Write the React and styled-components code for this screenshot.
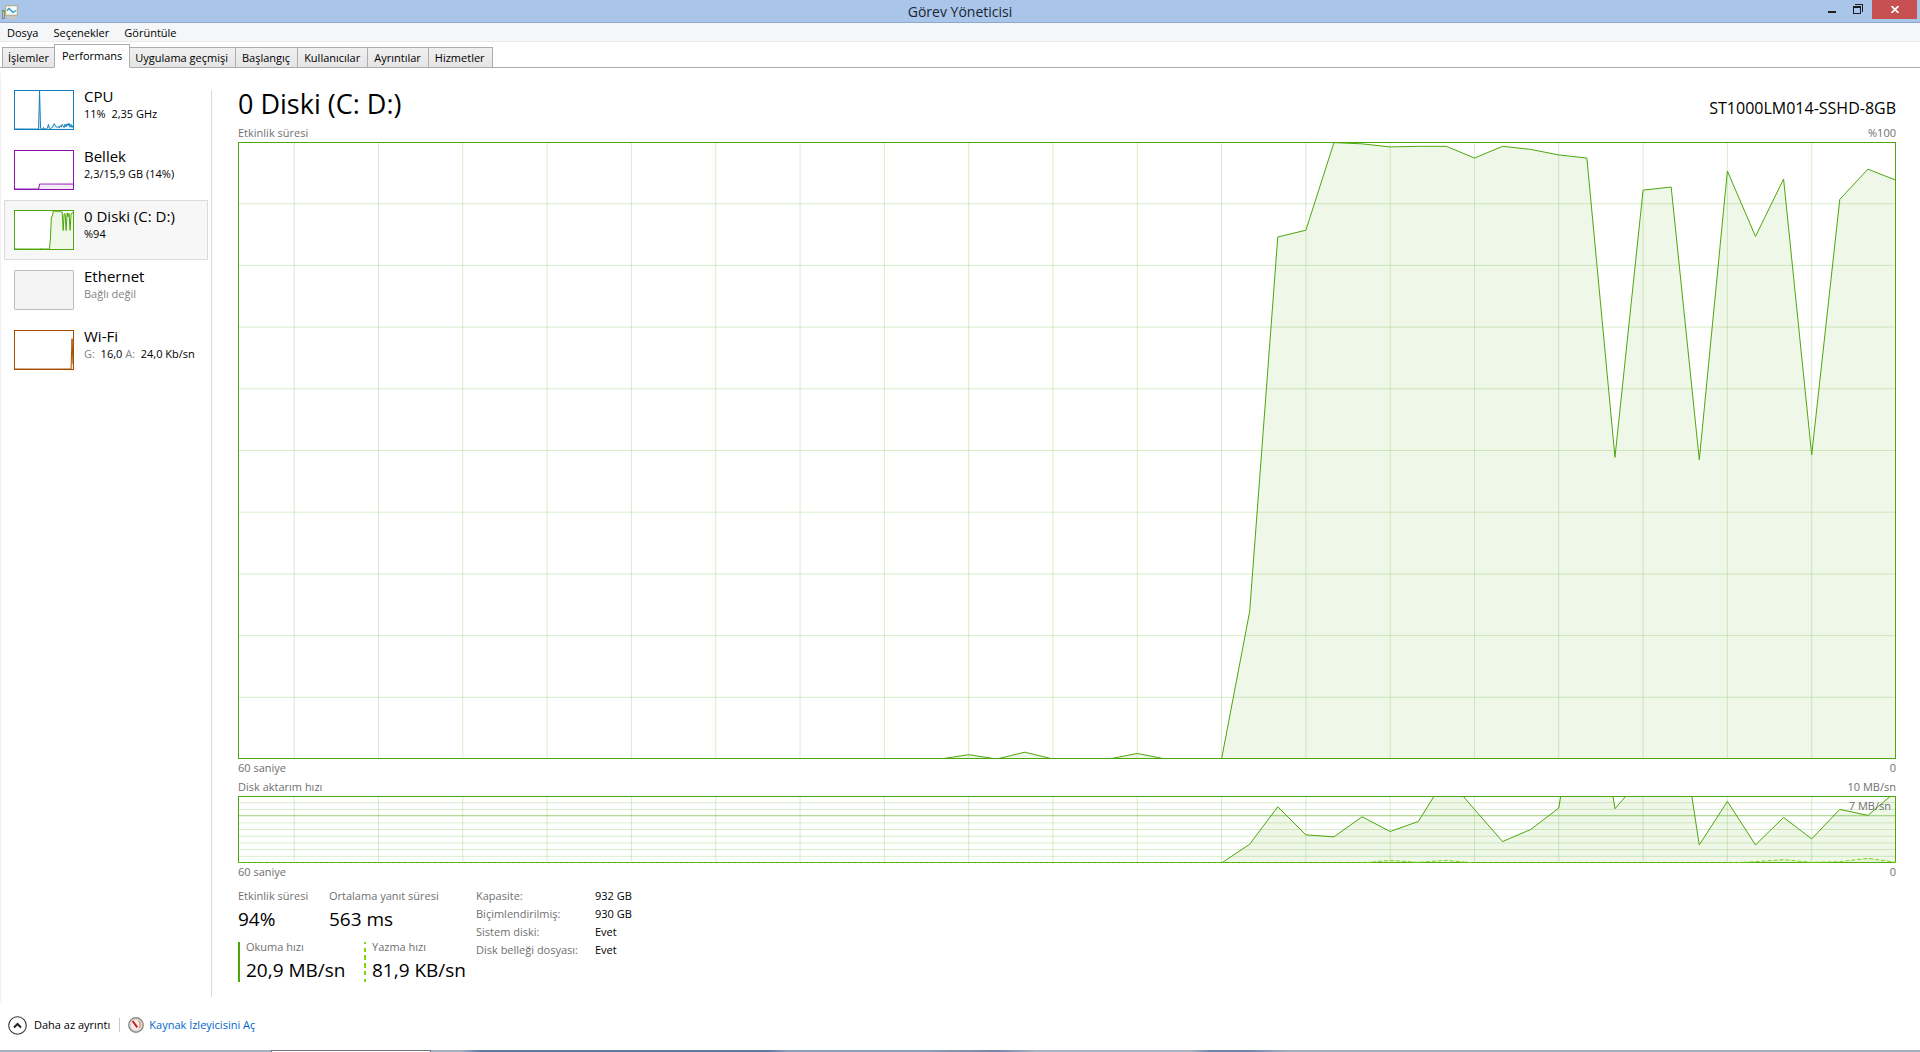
import React from "react";
import styled, { createGlobalStyle } from "styled-components";

const GlobalStyle = createGlobalStyle`
  *, *::before, *::after { box-sizing: border-box; }
  body {
    margin: 0;
    background: #fff;
    color: #000;
    font-family: "Open Sans", "Noto Sans", "Segoe UI", sans-serif;
    font-size: 11px;
    line-height: 18px;
  }
  button {
    font: inherit;
    color: inherit;
    background: none;
    border: 0;
    padding: 0;
    margin: 0;
    text-align: left;
    white-space: nowrap;
  }
`;

const Window = styled.div`
  display: flex;
  flex-direction: column;
  min-height: 100vh;
`;

const TitleBar = styled.header`
  display: grid;
  grid-template-columns: 1fr auto 1fr;
  height: 23px;
  background: #a9c5ea;
  border-bottom: 1px solid #8da9cb;
`;

const AppIcon = styled.svg`
  display: block;
  margin: 4px 0 0 2px;
`;

const WindowTitle = styled.h1`
  margin: 0;
  font-size: 14px;
  font-weight: 400;
  line-height: 23px;
  color: #1c2530;
`;

const WindowButtons = styled.div`
  display: flex;
  justify-content: flex-end;
  align-items: flex-start;
  padding-right: 3px;
`;

const WindowButton = styled.button`
  display: flex;
  align-items: center;
  justify-content: center;
  width: ${(p) => (p.$close ? 45 : 26)}px;
  height: ${(p) => (p.$close ? 19 : 18)}px;
  margin-left: ${(p) => (p.$close ? 1 : 0)}px;
  background: ${(p) => (p.$close ? "#c75050" : "transparent")};
`;

const MenuBar = styled.nav`
  display: flex;
  gap: 15px;
  height: 19px;
  padding-left: 7px;
  background: #f5f6f7;
  border-bottom: 1px solid #e8e9ea;
  line-height: 19px;
`;

const TabStrip = styled.div`
  display: flex;
  align-items: flex-end;
  height: 26px;
  padding-left: 2px;
  border-bottom: 1px solid #acacac;
`;

const Tab = styled.button`
  height: ${(p) => (p.$active ? 24 : 21)}px;
  margin: 0 ${(p) => (p.$active ? -1 : 0)}px -1px ${(p) => (p.$active ? -1 : 0)}px;
  padding: ${(p) => (p.$active ? "0 7px" : p.$first ? "0 5px" : "0 7px 0 6px")};
  border: 1px solid #acacac;
  border-left-width: ${(p) => (p.$active || p.$first ? 1 : 0)}px;
  border-bottom-color: ${(p) => (p.$active ? "#fff" : "#acacac")};
  background: ${(p) => (p.$active ? "#fff" : "linear-gradient(#f0f0f0, #e5e5e5)")};
  position: relative;
  z-index: ${(p) => (p.$active ? 1 : 0)};
`;

const Body = styled.div`
  display: flex;
  flex: 1;
  margin-top: 5px;
  border-left: 1px solid #f0f0f0;
`;

const Sidebar = styled.aside`
  flex: none;
  width: 211px;
  margin: 17px 0 5px;
  border-right: 1px solid #d9d9d9;
`;

const ResourceList = styled.div`
  display: flex;
  flex-direction: column;
  margin: -10px 3px 0;
`;

const Resource = styled.button`
  display: flex;
  gap: 10px;
  height: 60px;
  padding: 9px 0 0 9px;
  border: 1px solid ${(p) => (p.$selected ? "#dadada" : "transparent")};
  background: ${(p) => (p.$selected ? "#f7f7f7" : "transparent")};
`;

const MiniFrame = styled.span`
  flex: none;
  width: 60px;
  height: 40px;
  border: 1px solid ${(p) => p.$color};
  border-radius: ${(p) => (p.$idle ? 1 : 0)}px;
  background: ${(p) => (p.$idle ? "#f4f4f4" : "#fff")};
`;

const ResourceText = styled.span`
  display: flex;
  flex-direction: column;
  margin-top: -3px;
`;

const ResourceName = styled.span`
  font-size: 15px;
  line-height: 18px;
`;

const ResourceDetail = styled.span`
  line-height: 18px;
  white-space: pre;
  color: ${(p) => (p.$idle ? "#838383" : "#000")};
`;

const Muted = styled.span`
  color: #838383;
`;

const Main = styled.main`
  display: flex;
  flex-direction: column;
  flex: 1;
  min-width: 0;
  padding: 11px 24px 20px 26px;
`;

const Heading = styled.div`
  display: flex;
  justify-content: space-between;
  align-items: baseline;
  height: 40px;
`;

const DiskTitle = styled.h2`
  margin: 0;
  font-size: 27px;
  font-weight: 400;
  line-height: 39px;
`;

const DiskModel = styled.span`
  font-size: 16px;
`;

const ChartLabels = styled.div`
  display: flex;
  justify-content: space-between;
  margin-top: ${(p) => p.$gap || 0}px;
  color: #707070;
`;

const ChartFrame = styled.div`
  position: relative;
  display: flex;
  flex: ${(p) => (p.$height ? "none" : "1")};
  height: ${(p) => (p.$height ? p.$height + "px" : "auto")};
  min-height: 0;
  border: 1px solid #4da60c;
`;

const Plot = styled.svg`
  width: 100%;
  height: 100%;
  display: block;
`;

const PlotHolder = styled.div`
  flex: 1;
  min-width: 0;
  margin: -1px;
  contain: size;
`;

const LimitLabel = styled.span`
  position: absolute;
  top: 0;
  right: 4px;
  color: #707070;
`;

const Stats = styled.section`
  display: flex;
  gap: 10px;
  margin-top: 6px;
`;

const StatGroups = styled.div`
  display: flex;
  flex-direction: column;
  gap: 9px;
  width: 228px;
`;

const StatRow = styled.dl`
  display: grid;
  grid-template-columns: ${(p) => p.$first}px 1fr;
  margin: 0;
`;

const Stat = styled.div`
  height: ${(p) => (p.$line ? 40 : 46)}px;
  padding-left: ${(p) => (p.$line ? 6 : 0)}px;
  border-left: ${(p) => (p.$line ? "2px solid transparent" : "0")};
  border-image: ${(p) =>
    p.$line === "dashed"
      ? "repeating-linear-gradient(#7ad813 0 4px, #fff 4px 7px) 2"
      : p.$line
      ? "linear-gradient(#4da60c, #4da60c) 2"
      : "none"};
  white-space: nowrap;
`;

const StatName = styled.dt`
  line-height: ${(p) => (p.$tight ? 10 : 18)}px;
  color: #707070;
`;

const StatValue = styled.dd`
  margin: 0;
  font-size: 19px;
  line-height: ${(p) => (p.$tall ? 36 : 28)}px;
`;

const Facts = styled.table`
  border-collapse: collapse;
  align-self: flex-start;
  th, td {
    padding: 0;
    height: 18px;
    font-weight: 400;
    text-align: left;
    white-space: nowrap;
  }
  th { width: 119px; color: #707070; }
`;

const Footer = styled.footer`
  display: flex;
  align-items: center;
  height: 48px;
  padding: 0 8px 2px;
`;

const LessDetail = styled.button`
  display: flex;
  align-items: center;
  gap: 7px;
`;

const FooterDivider = styled.span`
  width: 1px;
  height: 14px;
  margin: 0 8px 0 9px;
  background: #c8c8c8;
`;

const MonitorLink = styled.a`
  display: flex;
  align-items: center;
  gap: 5px;
  color: #0066cc;
  text-decoration: none;
`;

const DesktopEdge = styled.div`
  display: flex;
  height: 2px;
  background: linear-gradient(90deg, #a3b1c6 0 24%, #5b7ba1 25% 40%, #8b9fbb 41% 48%, #7288a8 52%, #a9b6ca 54% 62%, #6c86a9 63% 65%, #a0aec4 67%);
`;

const DesktopTab = styled.span`
  width: 160px;
  margin-left: 271px;
  border: 1px solid #6f7386;
  border-bottom: 0;
  background: #fff;
`;

const activity = [
  ...Array(26).fill(0), 0.7, 0, 1.1, 0, 0, 0, 0.9, 0, 0, 0, 23.9, 84.6, 85.7, 99.9, 99.7, 99.2,
  99.3, 99.3, 97.4, 99.3, 98.8, 97.9, 97.4, 48.9, 92.2, 92.7, 48.5, 95.3, 84.7, 94, 49.3, 90.7,
  95.6, 93.8,
];

const reads = [
  ...Array(36).fill(0), 2.8, 8.4, 4.2, 3.9, 6.9, 4.7, 6.2, 12.9, 8, 3.2, 5, 8.2, 34, 8.1, 13, 30,
  2.7, 9.2, 2.7, 6.8, 3.6, 8, 7.1, 10.7,
];

const writes = [
  ...Array(41).fill(0), 0.4, 0.1, 0.4, 0, 0, 0, 0, 0, 0, 0, 0, 0, 0, 0.2, 0.5, 0.1, 0.2, 0.7, 0.1,
];

const cpu = [
  ...Array(25).fill(0), 100, 2, 1, 0, 4, 0, 1, 0, 2, 12, 2, 1, 3, 4, 9, 14, 8, 6, 4, 7, 3, 9, 5,
  12, 8, 4, 13, 6, 14, 9, 15, 5, 12, 4, 9, 3, 11,
];

const memory = [...Array(25).fill(0), ...Array(35).fill(13)];
const wifi = [...Array(58).fill(0), 80, 12];

const toPath = (data, max) =>
  data.map((v, i) => `${i ? "L" : "M"}${i} ${100 - (v / max) * 100}`).join("");

function Series({ data, max, color, dashed }) {
  const line = toPath(data, max);
  const end = data.length - 1;
  return (
    <>
      <path d={`${line}L${end} 100L0 100Z`} fill={color} fillOpacity="0.09" />
      <path
        d={line}
        fill="none"
        stroke={color}
        strokeWidth="1"
        strokeDasharray={dashed ? "4 2" : undefined}
        vectorEffect="non-scaling-stroke"
      />
    </>
  );
}

function Chart({ label, height, limit, children }) {
  const columns = [];
  for (let x = 2; x < 59; x += 3) columns.push(x);
  return (
    <ChartFrame $height={height}>
      <PlotHolder>
        <Plot viewBox="0 0 59 100" preserveAspectRatio="none" role="img" aria-label={label}>
          <g stroke="#4da60c" strokeOpacity="0.21" strokeWidth="1" shapeRendering="crispEdges">
            {columns.map((x) => (
              <line key={x} x1={x} x2={x} y1="0" y2="100" vectorEffect="non-scaling-stroke" />
            ))}
            {[10, 20, 30, 40, 50, 60, 70, 80, 90].map((y) => (
              <line key={y} x1="0" x2="59" y1={y} y2={y} vectorEffect="non-scaling-stroke" />
            ))}
            {limit && (
              <line x1="0" x2="59" y1={limit} y2={limit} strokeOpacity="0.4" vectorEffect="non-scaling-stroke" />
            )}
          </g>
          {children}
        </Plot>
      </PlotHolder>
      {limit && <LimitLabel>7 MB/sn</LimitLabel>}
    </ChartFrame>
  );
}

function Mini({ color, data }) {
  return (
    <MiniFrame $color={color} $idle={!data}>
      {data && (
        <Plot viewBox="0 0 59 100" preserveAspectRatio="none" aria-hidden="true">
          <Series data={data} max={100} color={color} />
        </Plot>
      )}
    </MiniFrame>
  );
}

const resources = [
  { name: "CPU", color: "#117dbb", data: cpu, detail: "11%  2,35 GHz" },
  { name: "Bellek", color: "#8b12ae", data: memory, detail: "2,3/15,9 GB (14%)" },
  { name: "0 Diski (C: D:)", color: "#4da60c", data: activity, detail: "%94", selected: true },
  { name: "Ethernet", color: "#bcbcbc", detail: "Bağlı değil", idle: true },
  {
    name: "Wi-Fi",
    color: "#a74f01",
    data: wifi,
    detail: (
      <>
        <Muted>G:</Muted>{"  "}16,0 <Muted>A:</Muted>{"  "}24,0 Kb/sn
      </>
    ),
  },
];

const tabs = ["İşlemler", "Performans", "Uygulama geçmişi", "Başlangıç", "Kullanıcılar", "Ayrıntılar", "Hizmetler"];

const facts = [
  ["Kapasite:", "932 GB"],
  ["Biçimlendirilmiş:", "930 GB"],
  ["Sistem diski:", "Evet"],
  ["Disk belleği dosyası:", "Evet"],
];

export default function App() {
  return (
    <Window>
      <GlobalStyle />
      <TitleBar>
        <AppIcon width="17" height="16" viewBox="0 0 17 16" aria-hidden="true">
          <rect x="0.5" y="6.5" width="2" height="8" fill="#c9c9bd" stroke="#85857c" />
          <path d="M0 7h3v1H0z" fill="#5fc21c" />
          <path d="M3.5 1.5h12v10h-12z" fill="#e8e4d2" stroke="#b5af98" />
          <path d="M5 3h9v7H5z" fill="#f2fbff" />
          <path d="M5 6.5l2-2 4 4 3-2" fill="none" stroke="#2a93c4" strokeWidth="1.3" />
          <path d="M8 12h4v1h2v2H6v-2h2z" fill="#cbc7b3" />
        </AppIcon>
        <WindowTitle>Görev Yöneticisi</WindowTitle>
        <WindowButtons>
          <WindowButton aria-label="Simge durumuna küçült">
            <svg width="8" height="8"><path d="M0 6h8v2H0z" fill="#1e1e1e" /></svg>
          </WindowButton>
          <WindowButton aria-label="Geri yükle">
            <svg width="10" height="10" shapeRendering="crispEdges">
              <path d="M0 2h8v8H0zM1 4v5h6V4z" fill="#1e1e1e" fillRule="evenodd" />
              <path d="M2 0h8v8H9V1H2z" fill="#1e1e1e" />
            </svg>
          </WindowButton>
          <WindowButton $close aria-label="Kapat">
            <svg width="8" height="7"><path d="M0.5 0l7 7M7.5 0l-7 7" stroke="#fff" strokeWidth="1.7" /></svg>
          </WindowButton>
        </WindowButtons>
      </TitleBar>
      <MenuBar>
        <button>Dosya</button>
        <button>Seçenekler</button>
        <button>Görüntüle</button>
      </MenuBar>
      <TabStrip role="tablist">
        {tabs.map((t, i) => (
          <Tab key={t} role="tab" aria-selected={i === 1} $active={i === 1} $first={i === 0}>
            {t}
          </Tab>
        ))}
      </TabStrip>
      <Body>
        <Sidebar>
          <ResourceList>
            {resources.map((r) => (
              <Resource key={r.name} $selected={r.selected}>
                <Mini color={r.color} data={r.data} />
                <ResourceText>
                  <ResourceName>{r.name}</ResourceName>
                  <ResourceDetail $idle={r.idle}>{r.detail}</ResourceDetail>
                </ResourceText>
              </Resource>
            ))}
          </ResourceList>
        </Sidebar>
        <Main>
          <Heading>
            <DiskTitle>0 Diski (C: D:)</DiskTitle>
            <DiskModel>ST1000LM014-SSHD-8GB</DiskModel>
          </Heading>
          <ChartLabels>
            <span>Etkinlik süresi</span>
            <span>%100</span>
          </ChartLabels>
          <Chart label="Etkinlik süresi">
            <Series data={activity} max={100} color="#4da60c" />
          </Chart>
          <ChartLabels>
            <span>60 saniye</span>
            <span>0</span>
          </ChartLabels>
          <ChartLabels $gap={1}>
            <span>Disk aktarım hızı</span>
            <span>10 MB/sn</span>
          </ChartLabels>
          <Chart label="Disk aktarım hızı" height={67} limit={29}>
            <Series data={reads} max={10} color="#4da60c" />
            <Series data={writes} max={10} color="#7ad813" dashed />
          </Chart>
          <ChartLabels>
            <span>60 saniye</span>
            <span>0</span>
          </ChartLabels>
          <Stats>
            <StatGroups>
              <StatRow $first={91}>
                <Stat>
                  <StatName>Etkinlik süresi</StatName>
                  <StatValue>94%</StatValue>
                </Stat>
                <Stat>
                  <StatName>Ortalama yanıt süresi</StatName>
                  <StatValue>563 ms</StatValue>
                </Stat>
              </StatRow>
              <StatRow $first={126}>
                <Stat $line="solid">
                  <StatName $tight>Okuma hızı</StatName>
                  <StatValue $tall>20,9 MB/sn</StatValue>
                </Stat>
                <Stat $line="dashed">
                  <StatName $tight>Yazma hızı</StatName>
                  <StatValue $tall>81,9 KB/sn</StatValue>
                </Stat>
              </StatRow>
            </StatGroups>
            <Facts>
              <tbody>
                {facts.map(([k, v]) => (
                  <tr key={k}>
                    <th scope="row">{k}</th>
                    <td>{v}</td>
                  </tr>
                ))}
              </tbody>
            </Facts>
          </Stats>
        </Main>
      </Body>
      <Footer>
        <LessDetail>
          <svg width="19" height="19" viewBox="0 0 19 19" aria-hidden="true">
            <circle cx="9.5" cy="9.5" r="8.8" fill="#fff" stroke="#333" strokeWidth="1.1" />
            <path d="M6 11.5l3.5-3.5 3.5 3.5" fill="none" stroke="#222" strokeWidth="2" />
          </svg>
          Daha az ayrıntı
        </LessDetail>
        <FooterDivider />
        <MonitorLink href="#resmon">
          <svg width="16" height="16" viewBox="0 0 16 16" aria-hidden="true">
            <circle cx="8" cy="8" r="7.2" fill="#f6f2ee" stroke="#8b8783" strokeWidth="1.4" />
            <circle cx="8" cy="8" r="5.4" fill="none" stroke="#cfc9c3" />
            <path d="M10.5 4a5 5 0 0 1 .5 7" fill="none" stroke="#e08a55" strokeWidth="1.2" />
            <path d="M4.6 4L9.3 10.3" stroke="#d4141c" strokeWidth="2" />
          </svg>
          Kaynak İzleyicisini Aç
        </MonitorLink>
      </Footer>
      <DesktopEdge>
        <DesktopTab />
      </DesktopEdge>
    </Window>
  );
}
